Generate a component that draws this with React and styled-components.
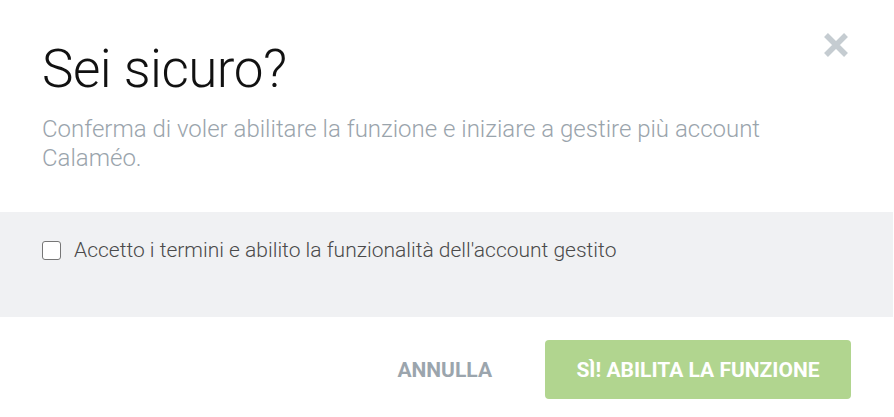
import React, { useState } from "react";
import styled, { createGlobalStyle } from "styled-components";

const GlobalStyles = createGlobalStyle`
  html, body {
    margin: 0;
    padding: 0;
    background: #fff;
    font-family: Roboto, "Liberation Sans", sans-serif;
  }
  * {
    box-sizing: border-box;
  }
`;

const Modal = styled.div`
  position: relative;
  width: 894px;
  height: 417px;
  background: #fff;
  display: flex;
  flex-direction: column;
`;

const Header = styled.div`
  padding: 37px 42px 0 42px;
  height: 212px;
`;

const Title = styled.h1`
  margin: 0;
  font-size: 53px;
  font-weight: 300;
  color: #111;
  line-height: 64px;
  letter-spacing: -0.5px;
`;

const Subtitle = styled.p`
  margin: 14px 0 0 0;
  max-width: 780px;
  font-size: 24px;
  font-weight: 300;
  line-height: 29px;
  color: #9aa4ac;
`;

const CloseButton = styled.button`
  position: absolute;
  top: 31px;
  right: 44px;
  width: 28px;
  height: 28px;
  padding: 0;
  border: none;
  background: none;
  cursor: pointer;
  display: flex;
  align-items: center;
  justify-content: center;
`;

const Band = styled.div`
  height: 105px;
  margin-right: 1px;
  background: #f0f1f3;
  padding: 24px 42px 0 42px;
`;

const CheckRow = styled.label`
  display: flex;
  align-items: center;
  gap: 13px;
  cursor: pointer;
`;

const Box = styled.span`
  width: 19px;
  height: 19px;
  border: 1.5px solid #767676;
  border-radius: 3px;
  background: ${(p) => (p.$checked ? "#76b043" : "#fff")};
  flex-shrink: 0;
`;

const HiddenInput = styled.input`
  display: none;
`;

const CheckLabel = styled.span`
  font-size: 21px;
  font-weight: 300;
  color: #4a4a4a;
  line-height: 28px;
`;

const Footer = styled.div`
  flex: 1;
  display: flex;
  justify-content: flex-end;
  align-items: flex-start;
  padding: 23px 43px 0 0;
  gap: 53px;
`;

const CancelButton = styled.button`
  height: 59px;
  border: none;
  background: none;
  padding: 0;
  font-family: inherit;
  font-size: 21px;
  font-weight: 700;
  color: #9ba5ad;
  cursor: pointer;
  text-transform: uppercase;
`;

const ConfirmButton = styled.button`
  width: 306px;
  height: 59px;
  border: none;
  border-radius: 4px;
  background: #b1d58f;
  color: #fff;
  font-family: inherit;
  font-size: 21px;
  font-weight: 700;
  cursor: pointer;
  text-transform: uppercase;
`;

const App = () => {
  const [checked, setChecked] = useState(false);
  return (
    <>
      <GlobalStyles />
      <Modal>
        <CloseButton aria-label="Chiudi">
          <svg width="26" height="26" viewBox="0 0 26 26">
            <path
              d="M3 3 L23 23 M23 3 L3 23"
              stroke="#c5ccd1"
              strokeWidth="5.5"
              strokeLinecap="butt"
            />
          </svg>
        </CloseButton>
        <Header>
          <Title>Sei sicuro?</Title>
          <Subtitle>
            Conferma di voler abilitare la funzione e iniziare a gestire più
            account Calaméo.
          </Subtitle>
        </Header>
        <Band>
          <CheckRow>
            <HiddenInput
              type="checkbox"
              checked={checked}
              onChange={(e) => setChecked(e.target.checked)}
            />
            <Box $checked={checked} />
            <CheckLabel>
              Accetto i termini e abilito la funzionalità dell'account gestito
            </CheckLabel>
          </CheckRow>
        </Band>
        <Footer>
          <CancelButton>Annulla</CancelButton>
          <ConfirmButton>Sì! Abilita la funzione</ConfirmButton>
        </Footer>
      </Modal>
    </>
  );
};

export default App;
